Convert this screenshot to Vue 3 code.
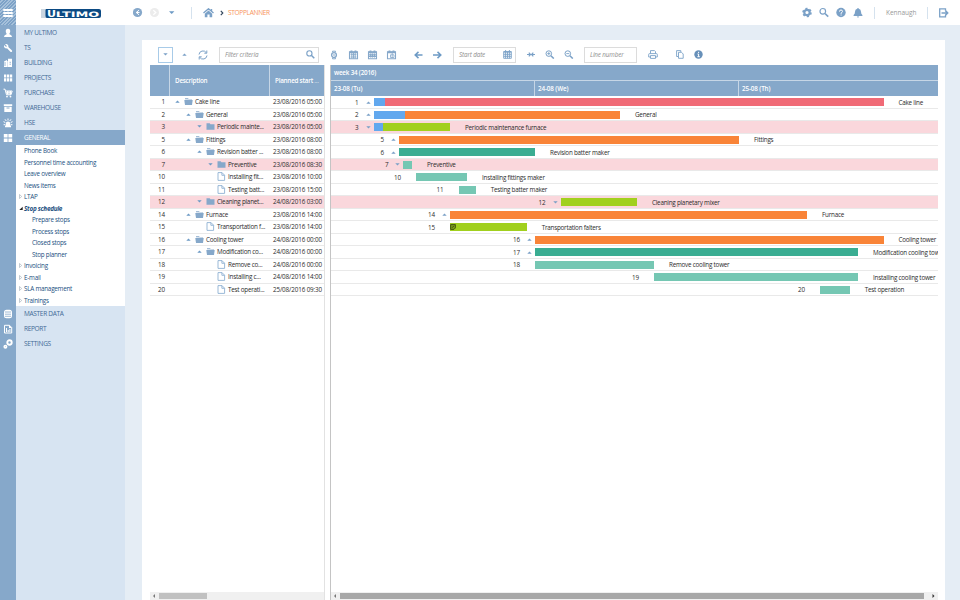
<script setup>
const top = [
  ['MY ULTIMO', 'user'], ['TS', 'wrench'], ['BUILDING', 'building'], ['PROJECTS', 'grid'],
  ['PURCHASE', 'cart'], ['WAREHOUSE', 'box'], ['HSE', 'alarm'], ['GENERAL', 'tiles'],
]
const bottom = [['MASTER DATA', 'db'], ['REPORT', 'report'], ['SETTINGS', 'gears']]
const sub = [
  ['Phone Book'], ['Personnel time accounting'], ['Leave overview'], ['News items'],
  ['LTAP', 'closed'], ['Stop schedule', 'open'], ['Prepare stops', 'leaf'], ['Process stops', 'leaf'],
  ['Closed stops', 'leaf'], ['Stop planner', 'leaf'], ['Invoicing', 'closed'], ['E-mail', 'closed'],
  ['SLA management', 'closed'], ['Trainings', 'closed'],
]
const C = { red: '#f06a76', orange: '#f98438', green: '#a1d01e', teal: '#3aad92', mint: '#75c7b3' }
// id, depth, kind, tree label, planned start, bar start, bar end, colour, progress end, full label
const rows = [
  [1, 0, 'up', 'Cake line', '23/08/2016 05:00', 42.5, 552.5, 'red', 54, 'Cake line'],
  [2, 1, 'up', 'General', '23/08/2016 05:00', 42.5, 289, 'orange', 73.7, 'General'],
  [3, 2, 'down', 'Periodic mainte...', '23/08/2016 05:00', 42.5, 119, 'green', 52, 'Periodic maintenance furnace'],
  [5, 1, 'up', 'Fittings', '23/08/2016 08:00', 68, 408, 'orange', 0, 'Fittings'],
  [6, 2, 'up', 'Revision batter ...', '23/08/2016 08:00', 68, 204, 'teal', 0, 'Revision batter maker'],
  [7, 3, 'down', 'Preventive', '23/08/2016 08:30', 72.4, 81, 'mint', 0, 'Preventive'],
  [10, 3, 'file', 'Installing fit...', '23/08/2016 10:00', 85, 136, 'mint', 0, 'Installing fittings maker'],
  [11, 3, 'file', 'Testing batt...', '23/08/2016 15:00', 127.5, 144.7, 'mint', 0, 'Testing batter maker'],
  [12, 2, 'down', 'Cleaning planet...', '24/08/2016 03:00', 229.5, 306, 'green', 0, 'Cleaning planetary mixer'],
  [14, 1, 'up', 'Furnace', '23/08/2016 14:00', 119, 476, 'orange', 0, 'Furnace'],
  [15, 2, 'file', 'Transportation f...', '23/08/2016 14:00', 119, 195.7, 'green', 0, 'Transportation falters'],
  [16, 1, 'up', 'Cooling tower', '24/08/2016 00:00', 204, 552.5, 'orange', 0, 'Cooling tower'],
  [17, 2, 'up', 'Modification co...', '24/08/2016 00:00', 204, 527, 'teal', 0, 'Modification cooling tower'],
  [18, 3, 'file', 'Remove co...', '24/08/2016 00:00', 204, 323, 'mint', 0, 'Remove cooling tower'],
  [19, 3, 'file', 'Installing c...', '24/08/2016 14:00', 323, 527, 'mint', 0, 'Installing cooling tower'],
  [20, 3, 'file', 'Test operati...', '25/08/2016 09:30', 489, 518.7, 'mint', 0, 'Test operation'],
].map(([id, depth, kind, name, start, from, to, color, done, label]) =>
  ({ id, depth, kind, name, start, from, to, color: C[color], done, label }))
</script>

<template>
  <div class="app">
    <header class="top">
      <div class="burger"><i /><i /><i /></div>
      <div class="brand">
        <svg width="61" height="10" viewBox="0 0 61 10">
          <path d="M0 0H6V9H0Z" fill="#c9d5e0" />
          <path d="M5 0H58Q60 0 60 2V7Q60 9 58 9H6Q4.500 9 4.500 7V1Z" fill="#0b4a83" />
          <text x="6" y="7.700" textLength="9" lengthAdjust="spacingAndGlyphs" class="lg big">U</text>
          <text x="14.800" y="7.500" textLength="43.500" lengthAdjust="spacingAndGlyphs" class="lg">LTIMO</text>
        </svg>
      </div>
      <svg class="nav" width="49" height="12" viewBox="0 0 49 12">
        <circle cx="4.500" cy="5.500" r="4.600" fill="#86a8ca" />
        <path d="M6 3.200L3.200 5.500L6 7.800M3.400 5.500H6.500" stroke="#fff" fill="none" />
        <circle cx="21.500" cy="5.500" r="4.500" fill="#ececec" />
        <path d="M20.300 3.200L22.800 5.500L20.300 7.800" stroke="#fff" stroke-width="1.200" fill="none" />
        <path d="M36 4.300H41.400L38.700 7.100Z" fill="#6d9ac5" />
      </svg>
      <i class="sep s1" />
      <svg class="home" width="11" height="10" viewBox="0 0 11 10">
        <path d="M.5 5L5.500.8L10.500 5M8.500 1V3" stroke="#7ba1c7" stroke-width="1.400" fill="none" />
        <path d="M1.800 5.700L5.500 2.600L9.200 5.700V9.300H6.600V6.500H4.400V9.300H1.800Z" fill="#7ba1c7" />
      </svg>
      <svg class="chev" width="4" height="6" viewBox="0 0 4 6"><path d="M.8.8L2.800 3L.8 5.200" stroke="#34495e" stroke-width="1.200" fill="none" /></svg>
      <span class="crumb">STOPPLANNER</span>
      <div class="grow" />
      <svg class="acts" width="62" height="12" viewBox="0 0 62 12">
        <circle cx="5" cy="5.500" r="2.700" stroke="#7ba1c7" stroke-width="2.200" fill="none" />
        <circle cx="5" cy="5.500" r="4" stroke="#7ba1c7" stroke-width="1.600" fill="none" stroke-dasharray="2.100 2.089" />
        <circle cx="20.800" cy="4.300" r="2.800" stroke="#7ba1c7" stroke-width="1.200" fill="none" />
        <path d="M23 6.500L26.200 9.600" stroke="#7ba1c7" stroke-width="1.700" />
        <circle cx="39" cy="5.500" r="4.700" fill="#7ba1c7" />
        <path d="M37.500 4.600Q37.500 3 39 3T40.500 4.500Q40.500 5.300 39.100 6V6.800M39.100 7.500V8.500" stroke="#fff" stroke-width="1" fill="none" />
        <path d="M51.600 9V8Q53 7 53 4.800Q53 2.200 55.200 1.800Q55.300 1 56 1T56.800 1.800Q59 2.200 59 4.800Q59 7 60.400 8V9ZM54.800 9.500H57.200Q57 10.400 56 10.400T54.800 9.500Z" fill="#7ba1c7" />
      </svg>
      <i class="sep s2" />
      <span class="who">Kennaugh</span>
      <i class="sep s3" />
      <svg class="exit" width="10" height="10" viewBox="0 0 10 10">
        <path d="M6.500 2.800V.8H.7V8.900H6.500V7" stroke="#7ba1c7" stroke-width="1.300" fill="none" />
        <path d="M2.500 4.900H8.500M6.400 2.600L8.700 4.900L6.400 7.200" stroke="#7ba1c7" stroke-width="1.500" fill="none" />
      </svg>
    </header>

    <div class="body">
      <nav class="side">
        <div v-for="(m, i) in [...top, ...bottom]" :key="m[0]" class="group">
          <div class="item" :class="{ active: m[0] === 'GENERAL' }">
            <svg class="ico" width="10" height="10" viewBox="0 0 10 10" fill="#fff">
              <path v-if="m[1] === 'user'" d="M5 .8C7 .8 7.400 2.300 7.200 3.800C7 5 6.500 5.500 6.300 6C6.700 6.800 9 6.800 9 9H1C1 6.800 3.300 6.800 3.700 6C3.500 5.500 3 5 2.800 3.800C2.600 2.300 3 .8 5 .8Z" />
              <path v-else-if="m[1] === 'wrench'" d="M2 1.200L3.900 3.100L3.100 3.900L1.200 2Q.4 4 1.900 5.100Q3 5.700 4 5.300L7.400 8.800Q8.200 9.400 8.900 8.700T8.800 7.200L5.300 3.900Q5.700 3 5 1.900Q3.800.5 2 1.200Z" />
              <template v-else-if="m[1] === 'building'"><path d="M1 3.500L4 2V9H1ZM5 .8H9V9H5Z" /><path d="M4 3H5V9H4Z" opacity=".7" /><path d="M2 4V8M6.500 4.300H8M6.500 6.200H8" stroke="#86a8ca" stroke-width=".8" /></template>
              <path v-else-if="m[1] === 'grid'" d="M1 1.500H3.300V4.500H1ZM4 1.500H6.200V4.500H4ZM6.900 1.500H9.200V4.500H6.900ZM1 5.200H3.300V8.500H1ZM4 5.200H6.200V8.500H4ZM6.900 5.200H9.200V8.500H6.900Z" />
              <template v-else-if="m[1] === 'cart'"><path d="M.5 1.200H2L3.500 6.800H8L9.200 3H2.600M4.500 3V6.500M6 3V6.500M7.500 3V6.500M3 4.800H8.500" stroke="#fff" stroke-width="1" fill="none" /><circle cx="4" cy="8.600" r=".9" /><circle cx="7.500" cy="8.600" r=".9" /></template>
              <template v-else-if="m[1] === 'box'"><path d="M.8 1.200H9.200V3H.8ZM1.300 3.700H8.700V9H1.300Z" /><path d="M3.500 5H6.500" stroke="#86a8ca" /></template>
              <template v-else-if="m[1] === 'alarm'"><path d="M2.800 5.500Q2.800 3.400 5 3.400T7.200 5.500L7.700 8H2.300ZM2 8H8V9.300H2Z" /><path d="M5 .5V2.500M2 1.300L3.300 3M8 1.300L6.700 3M.5 3.700L2.300 4.500M9.500 3.700L7.700 4.500M.6 6.700H2M8 6.700H9.400" stroke="#fff" stroke-width="1" /></template>
              <path v-else-if="m[1] === 'tiles'" d="M.8 1H4.600V4.600H.8ZM5.400 1H9.200V4.600H5.400ZM.8 5.400H4.600V9H.8ZM5.400 5.400H9.200V9H5.400Z" />
              <template v-else-if="m[1] === 'db'"><rect x="1" y=".8" width="8" height="8.400" rx="2.500" /><path d="M2 3H8M2 5.200H8M2 7.300H8" stroke="#86a8ca" stroke-width=".8" /></template>
              <template v-else-if="m[1] === 'report'"><path d="M1.500 1.300H6.500L8.700 3.500V9H1.500Z" stroke="#fff" stroke-width="1" fill="none" /><path d="M6 1V4H9ZM3 4H4V8H3ZM4.700 6H5.700V8H4.700ZM6.400 5H7.400V8H6.400Z" /></template>
              <template v-else><circle cx="6.500" cy="3.500" r="2.200" stroke="#fff" stroke-width="1.900" fill="none" /><circle cx="2.400" cy="7.700" r="1.200" stroke="#fff" stroke-width="1.600" fill="none" /></template>
            </svg>
            <span>{{ m[0] }}</span>
          </div>
          <div v-if="i === 7" class="sub">
            <div v-for="s in sub" :key="s[0]" class="srow" :class="s[1]">
              <svg class="tw" width="4" height="5" viewBox="0 0 4 5">
                <path v-if="s[1] === 'closed'" d="M.5.5L2.700 2.500L.5 4.500Z" fill="none" stroke="#9aa7b3" stroke-width=".6" />
                <path v-if="s[1] === 'open'" d="M3.700.7V4H.3Z" fill="#222" />
              </svg>
              <span>{{ s[0] }}</span>
            </div>
          </div>
        </div>
      </nav>

      <main class="panel">
        <div class="tools">
          <span class="drop"><svg width="5" height="3" viewBox="0 0 5 3"><path d="M.3.200H4.700L2.500 2.600Z" fill="#7ba1c7" /></svg></span>
          <svg class="t-up" width="5" height="3" viewBox="0 0 5 3"><path d="M.3 2.800H4.700L2.500.4Z" fill="#7ba1c7" /></svg>
          <svg class="t-ref" width="10" height="10" viewBox="0 0 10 10"><path d="M1 4.500A4 4 0 0 1 8.300 2.700M9 5.500A4 4 0 0 1 1.700 7.300M8.800.5V3.200H6.300M1.200 9.500V6.800H3.700" stroke="#7ba1c7" fill="none" /></svg>
          <span class="field f1"><em>Filter criteria</em>
            <svg width="9" height="9" viewBox="0 0 9 9"><circle cx="3.400" cy="3.400" r="2.600" stroke="#7ba1c7" stroke-width="1.100" fill="none" /><path d="M5.300 5.300L8.300 8.300" stroke="#7ba1c7" stroke-width="1.500" /></svg>
          </span>
          <svg class="t-icons" width="68" height="10" viewBox="0 0 68 10">
            <g stroke="#86a8ca" fill="none">
              <circle cx="4" cy="5" r="2.400" stroke-width="1.400" /><path d="M2.500 2.300V1.200H5.500V2.300M2.500 7.700V8.800H5.500V7.700M3 5H5" />
              <g v-for="x in [19, 38, 57]" :key="x">
                <path :d="`M${x + .5} 1.900H${x + 8.5}V8.800H${x + .5}Z`" stroke-width="1.100" />
                <path :d="`M${x + .5} 2.400H${x + 8.5}M${x + 2.500} .5V2M${x + 6.500} .5V2`" stroke-width="1.900" />
              </g>
              <path d="M20.500 4.700H26.500M20.500 7H26.500M21.800 3V8.500M23.500 3V8.500M25.200 3V8.500" stroke-width=".9" />
              <path d="M39 4.800H46M39 6.500H46M40.700 3.500V7.500M42.500 3.500V7.500M44.500 3.500V7.500" stroke-width="1.200" />
              <path d="M60.500 4.800H64V7.500H60.500ZM62.200 3V8" stroke-width=".8" />
            </g>
          </svg>
          <svg class="t-arr" width="28" height="8" viewBox="0 0 28 8"><path d="M8.500 4H1.500M4.500.900L1.200 4L4.500 7.100M19 4H26M23.500.9L26.800 4L23.500 7.100" stroke="#6d9ac5" stroke-width="1.500" fill="none" /></svg>
          <span class="field f2"><em>Start date</em>
            <svg width="9" height="9" viewBox="0 0 9 9"><path d="M.7 1.500H8.300V8.300H.7ZM.7 2.200H8.300M.7 4.300H8.300M.7 6.300H8.300M2.600 0V8.300M4.500 2V8.300M6.400 0V8.300" stroke="#7ba1c7" stroke-width=".9" fill="none" /></svg>
          </span>
          <svg class="t-zoom" width="48" height="9" viewBox="0 0 48 9">
            <g stroke="#7ba1c7" fill="none">
              <path d="M0 4.500H8M1.800 2.700L3.500 4.500L1.800 6.300M6.300 2.700L4.600 4.500L6.300 6.300" stroke-width="1.200" />
              <circle cx="21.800" cy="3.600" r="2.800" /><path d="M20.300 3.600H23.300M21.800 2.100V5.100" stroke-width=".9" /><path d="M23.900 5.700L26.800 8.600" stroke-width="1.500" />
              <circle cx="40.800" cy="3.600" r="2.800" /><path d="M39.300 3.600H42.300" stroke-width=".9" /><path d="M42.900 5.700L45.800 8.600" stroke-width="1.500" />
            </g>
          </svg>
          <span class="field f3"><em>Line number</em></span>
          <svg class="t-print" width="10" height="9" viewBox="0 0 10 9"><path d="M2.500 3.500V.6H6.500L7.500 1.600V3.500M2.500 7H.7V4.500Q.7 3.600 1.500 3.600H8.500Q9.300 3.600 9.300 4.500V7H7.500M2.500 5.600H7.500V8.400H2.500Z" stroke="#7ba1c7" stroke-width=".9" fill="none" /></svg>
          <svg class="t-copy" width="8" height="9" viewBox="0 0 8 9"><path d="M2 6.500H.6V.6H4.800V2M2.500 2.300H5.500L7.200 4V8.300H2.500Z" stroke="#7ba1c7" stroke-width=".9" fill="none" /></svg>
          <svg class="t-info" width="9" height="9" viewBox="0 0 9 9"><circle cx="4.500" cy="4.500" r="4.200" fill="#6790b9" /><path d="M4.600 1.800V3M3.500 4H4.600V6.700M3.400 6.700H5.800" stroke="#fff" stroke-width="1" fill="none" /></svg>
        </div>

        <div class="planner">
          <section class="tree">
            <div class="thead"><b class="c0" /><b class="c1">Description</b><b class="c2">Planned start <i>...</i></b></div>
            <div v-for="r in rows" :key="r.id" class="row" :class="{ hot: r.kind === 'down' }">
              <span class="id">{{ r.id }}</span>
              <span class="indent" :style="{ width: r.depth * 11 + 'px' }" />
              <svg class="caret" width="5" height="3" viewBox="0 0 5 3">
                <path v-if="r.kind === 'up'" d="M.3 2.700H4.700L2.500.4Z" fill="#6d9ac5" />
                <path v-if="r.kind === 'down'" d="M.3.300H4.700L2.500 2.600Z" fill="#6d9ac5" />
              </svg>
              <svg class="node" width="9" height="9" viewBox="0 0 9 9">
                <path v-if="r.kind === 'file'" d="M1 .6H5L7.600 3.200V8.400H1ZM4.900.6V3.300H7.600" fill="#fff" stroke="#8fb1d3" stroke-width=".9" />
                <path v-else-if="r.kind === 'down'" d="M.5 1.300H3.700L4.500 2.200H8.500V7.800H.5Z" fill="#86a8ca" />
                <g v-else fill="#86a8ca"><path d="M1 2.300V1.300H4L4.700 1.900H8V2.500Z" /><path d="M.3 3.100H8.700L8 7.900H1Z" /></g>
              </svg>
              <span class="name">{{ r.name }}</span>
              <span class="date">{{ r.start }}</span>
            </div>
            <div class="grow" />
            <div class="bar-h"><svg width="9" height="8" viewBox="0 0 9 8"><path d="M5 2V6L3 4Z" fill="#777" /></svg><i class="th1" /></div>
          </section>
          <i class="split" />
          <section class="gantt">
            <div class="week">week 34 (2016)</div>
            <div class="days"><span class="d1">23-08 (Tu)</span><span class="d2">24-08 (We)</span><span class="d3">25-08 (Th)</span></div>
            <div v-for="r in rows" :key="r.id" class="row" :class="{ hot: r.kind === 'down' }">
              <span class="gid" :style="{ width: r.from - 15 + 'px' }">{{ r.id }}</span>
              <span class="gc">
                <svg width="5" height="3" viewBox="0 0 5 3">
                  <path v-if="r.kind === 'up'" d="M.3 2.700H4.700L2.500.4Z" fill="#7ba1c7" />
                  <path v-if="r.kind === 'down'" d="M.3.300H4.700L2.500 2.600Z" fill="#7ba1c7" />
                </svg>
              </span>
              <span class="bar" :style="{ width: r.to - r.from + 'px', background: r.color }">
                <i v-if="r.done" class="done" :style="{ width: r.done - r.from + 'px' }" />
                <svg v-if="r.id === 15" width="6" height="6" viewBox="0 0 6 6"><path d="M.6.6H5.400V3.900L3.900 5.400H.6Z" fill="#7a9c1c" stroke="#3d4f10" stroke-width=".9" /><path d="M2 3.800L4 1.800" stroke="#33420c" stroke-width=".8" /></svg>
              </span>
              <span class="lab">{{ r.label }}</span>
            </div>
            <div class="grow" />
            <div class="bar-h"><svg width="9" height="8" viewBox="0 0 9 8"><path d="M5 2V6L3 4Z" fill="#777" /></svg><i class="th2" /><svg width="14" height="8" viewBox="0 0 14 8"><path d="M8.500 2V6L10.500 4Z" fill="#333" /></svg></div>
          </section>
        </div>
      </main>
    </div>
  </div>
</template>

<style>
html, body { margin: 0; overflow: hidden; }
</style>

<style scoped>
* { box-sizing: border-box; }
svg { display: block; flex: none; }
.app { width: 960px; height: 600px; display: flex; flex-direction: column; font-family: "Open Sans", "Noto Sans", sans-serif; font-size: 6.300px; letter-spacing: -.23px; color: #2c2c2c; background: #e5edf5; overflow: hidden; }
.grow { flex: 1; }
.top { height: 25px; flex: none; display: flex; align-items: center; background: #fff; }
.burger { width: 16px; height: 25px; display: flex; flex-direction: column; align-items: center; justify-content: center; gap: 1px; background: repeating-linear-gradient(135deg, #7da2c7 0 1.2px, #a5c0da 1.2px 2.4px); }
.burger i { width: 10px; height: 2px; background: #fff; border-radius: 1px; }
.brand { margin-left: 25px; padding-top: 2px; width: 92px; }
.lg { font: bold 7.500px "DejaVu Sans", sans-serif; fill: #fff; letter-spacing: 0; }
.lg.big { font-size: 8.500px; }
.nav { margin-top: 1px; }
.sep { width: 1px; height: 12px; background: #d5e2ee; flex: none; }
.s1 { margin-left: 9px; }
.home { margin-left: 11px; }
.chev { margin-left: 6px; margin-top: 1px; }
.crumb { margin-left: 4px; color: #f7945a; font-size: 6.500px; letter-spacing: -.28px; }
.acts { margin-top: 1px; }
.s2 { margin-left: 10px; }
.who { margin-left: 11px; width: 30px; color: #999; font-size: 6.500px; letter-spacing: -.05px; white-space: nowrap; }
.s3 { margin-left: 11px; }
.exit { margin: 1px 11px 0 11px; }
.body { flex: 1; min-height: 0; display: flex; }
.side { width: 125px; flex: none; background: linear-gradient(90deg, #86a8ca 16px, #d7e4f2 16px); }
.item { height: 15px; display: flex; align-items: center; color: #3f6a96; font-size: 6.500px; letter-spacing: -.31px; }
.item.active { background: #86a8ca; color: #fff; }
.ico { margin: 1px 6px 0 3px; }
.item span { margin-left: 5px; }
.sub { margin-left: 16px; background: #fff; height: 161px; }
.srow { height: 11.500px; display: flex; align-items: center; color: #23517f; font-size: 6.300px; letter-spacing: -.24px; white-space: nowrap; }
.srow .tw { margin: 0 1px 0 3px; }
.srow.leaf span { margin-left: 8px; }
.srow.open { font-weight: bold; font-style: italic; }
.panel { margin: 15px 15px 0 17px; width: 803px; flex: none; background: #fff; padding-left: 8px; display: flex; flex-direction: column; }
.tools { height: 25px; padding-top: 4px; flex: none; display: flex; align-items: center; }
.drop { margin-left: 8px; width: 15px; height: 16px; border: 1px solid #a8cbe8; display: flex; align-items: center; justify-content: center; }
.t-up { margin-left: 9px; }
.t-ref { margin-left: 11px; }
.field { height: 16px; border: 1px solid #dcdcdc; display: flex; align-items: center; justify-content: space-between; padding: 0 4px 0 5px; color: #8e8e8e; letter-spacing: -.13px; }
.f1 { margin-left: 11px; width: 100px; padding-right: 3px; }
.t-icons { margin-left: 11px; }
.t-arr { margin-left: 16px; }
.f2 { margin-left: 11px; width: 63px; padding-right: 3px; }
.t-zoom { margin-left: 11px; }
.f3 { margin-left: 9px; width: 53px; }
.t-print { margin-left: 11px; }
.t-copy { margin-left: 18px; }
.t-info { margin-left: 10px; }
.planner { flex: 1; display: flex; min-height: 0; width: 788px; }
.tree { width: 175px; display: flex; flex-direction: column; border-right: 1px solid #e2e2e2; }
.split { width: 6px; border-right: 1px solid #c4c4c4; flex: none; }
.gantt { width: 607px; display: flex; flex-direction: column; overflow: hidden; }
.thead { height: 31.200px; flex: none; display: flex; align-items: center; background: #86a8ca; color: #fff; }
.thead b { height: 100%; display: flex; align-items: center; padding-left: 5px; border-right: 1px solid #c6d6e6; font-weight: 600; white-space: pre; }
.thead .c0 { width: 20px; }
.thead .c1 { width: 100px; }
.thead .c2 { width: 54px; border-right: 0; }
.thead i { font-style: normal; font-weight: 400; opacity: .7; }
.row { height: 12.500px; flex: none; display: flex; align-items: center; border-bottom: 1px solid #e9e9e9; white-space: nowrap; }
.hot { background: #fad7dc; }
.id { width: 15px; text-align: right; letter-spacing: -.13px; }
.caret { margin-left: 10px; }
.node { margin-left: 4px; }
.name { margin-left: 2px; flex: 1; }
.date { width: 51px; letter-spacing: -.13px; }
.week { height: 15.700px; flex: none; background: #86a8ca; color: #fff; font-weight: 600; letter-spacing: -.2px; display: flex; align-items: center; padding-left: 3px; border-bottom: 1px solid #c6d6e6; }
.days { height: 15.800px; flex: none; background: #86a8ca; color: #fff; font-weight: 600; letter-spacing: -.13px; display: flex; }
.days span { display: flex; align-items: center; padding-left: 3px; }
.days span + span { border-left: 1px solid #c6d6e6; }
.d1 { width: 203px; }
.d2 { width: 204px; }
.gid { text-align: right; flex: none; letter-spacing: -.13px; }
.gc { width: 15px; padding-left: 7px; flex: none; }
.bar { height: 8.400px; flex: none; display: flex; align-items: center; }
.done { height: 100%; background: #62a8ee; }
.lab { margin-left: 15px; }
.bar-h { height: 8px; flex: none; display: flex; align-items: center; background: #f0f0f0; }
.th1 { width: 48px; height: 6px; background: #c1c1c1; }
.th2 { width: 584px; height: 6px; background: #a8a8a8; }
</style>
